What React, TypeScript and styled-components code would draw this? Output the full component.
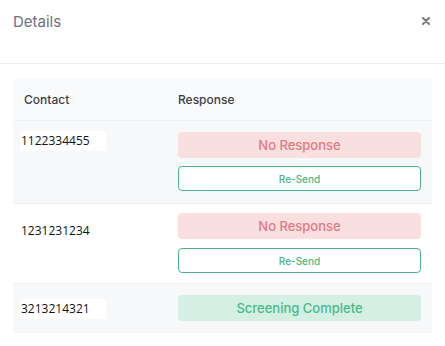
import React from 'react';
import styled, { createGlobalStyle } from 'styled-components';

const GlobalStyle = createGlobalStyle`
  html, body {
    margin: 0;
    padding: 0;
    background: #ffffff;
  }
  body {
    font-family: Inter, "Noto Sans", sans-serif;
  }
`;

const Modal = styled.div`
  width: 445px;
  height: 346px;
  background: #ffffff;
  display: flex;
  flex-direction: column;
`;

const Header = styled.div`
  height: 64px;
  display: flex;
  align-items: flex-start;
  justify-content: space-between;
  padding: 12px 14px 0 13px;
  box-sizing: border-box;
  border-bottom: 1px solid #eceef1;
`;

const Title = styled.h2`
  margin: 0;
  font-size: 15px;
  line-height: 20px;
  font-weight: 400;
  color: #6c7080;
`;

const Close = styled.button`
  border: none;
  background: none;
  padding: 0;
  margin-top: 4px;
  width: 10px;
  height: 10px;
  display: flex;
  align-items: center;
  justify-content: center;
  cursor: pointer;
`;

const Body = styled.div`
  padding: 15px 13px 0 13px;
`;

const Table = styled.div`
  display: flex;
  flex-direction: column;
`;

const HeadRow = styled.div`
  display: grid;
  grid-template-columns: 165px 1fr;
  height: 41px;
  align-items: center;
  background: #f9fafb;
`;

const HeadCell = styled.div<{ $first?: boolean }>`
  padding-left: ${p => (p.$first ? '11px' : '0')};
  font-size: 12px;
  font-weight: 500;
  color: #3b3e47;
`;

const Row = styled.div<{ $shaded: boolean }>`
  display: grid;
  grid-template-columns: 165px 1fr;
  border-top: 1px solid #eef0f3;
  background: ${p => (p.$shaded ? '#f7f8fa' : '#ffffff')};
`;

const ContactCell = styled.div<{ $offset: number }>`
  padding: ${p => p.$offset}px 0 0 7px;
`;

const Phone = styled.span`
  display: inline-block;
  background: #ffffff;
  padding: 0 16px 0 1px;
  height: 20px;
  line-height: 20px;
  font-family: "Open Sans", "Noto Sans", sans-serif;
  font-size: 12px;
  color: #111111;
`;

const ResponseCell = styled.div<{ $top: number; $bottom: number; $gap: number }>`
  display: flex;
  flex-direction: column;
  gap: ${p => p.$gap}px;
  padding: ${p => p.$top}px 11px ${p => p.$bottom}px 0;
`;

const Status = styled.div<{ $kind: 'none' | 'done' }>`
  height: 26px;
  border-radius: 4px;
  display: flex;
  align-items: center;
  justify-content: center;
  font-size: 13px;
  font-weight: 500;
  background: ${p => (p.$kind === 'none' ? '#fadfe0' : '#d5efe5')};
  color: ${p => (p.$kind === 'none' ? '#e17a82' : '#47bb88')};
`;

const Resend = styled.button`
  height: 25px;
  box-sizing: border-box;
  border: 1px solid #4cb386;
  border-radius: 4px;
  background: #ffffff;
  color: #49b584;
  font-family: Inter, "Noto Sans", sans-serif;
  font-size: 10px;
  font-weight: 500;
  cursor: pointer;
`;

type Entry = {
  phone: string;
  done: boolean;
  offset: number;
  top: number;
  bottom: number;
  gap: number;
};

const entries: Entry[] = [
  { phone: '1122334455', done: false, offset: 8, top: 11, bottom: 12, gap: 8 },
  { phone: '1231231234', done: false, offset: 15, top: 9, bottom: 10, gap: 9 },
  { phone: '3213214321', done: true, offset: 13, top: 11, bottom: 12, gap: 8 },
];

const App: React.FC = () => {
  return (
    <>
      <GlobalStyle />
      <Modal>
        <Header>
          <Title>Details</Title>
          <Close aria-label="Close">
            <svg width="8" height="8" viewBox="0 0 8 8">
              <path d="M1 1 L7 7 M7 1 L1 7" stroke="#777a80" strokeWidth="2" strokeLinecap="round" />
            </svg>
          </Close>
        </Header>
        <Body>
          <Table>
            <HeadRow>
              <HeadCell $first>Contact</HeadCell>
              <HeadCell>Response</HeadCell>
            </HeadRow>
            {entries.map((e, i) => (
              <Row key={e.phone} $shaded={i % 2 === 0}>
                <ContactCell $offset={e.offset}>
                  <Phone>{e.phone}</Phone>
                </ContactCell>
                <ResponseCell $top={e.top} $bottom={e.bottom} $gap={e.gap}>
                  {e.done ? (
                    <Status $kind="done">Screening Complete</Status>
                  ) : (
                    <>
                      <Status $kind="none">No Response</Status>
                      <Resend>Re-Send</Resend>
                    </>
                  )}
                </ResponseCell>
              </Row>
            ))}
          </Table>
        </Body>
      </Modal>
    </>
  );
};

export default App;
